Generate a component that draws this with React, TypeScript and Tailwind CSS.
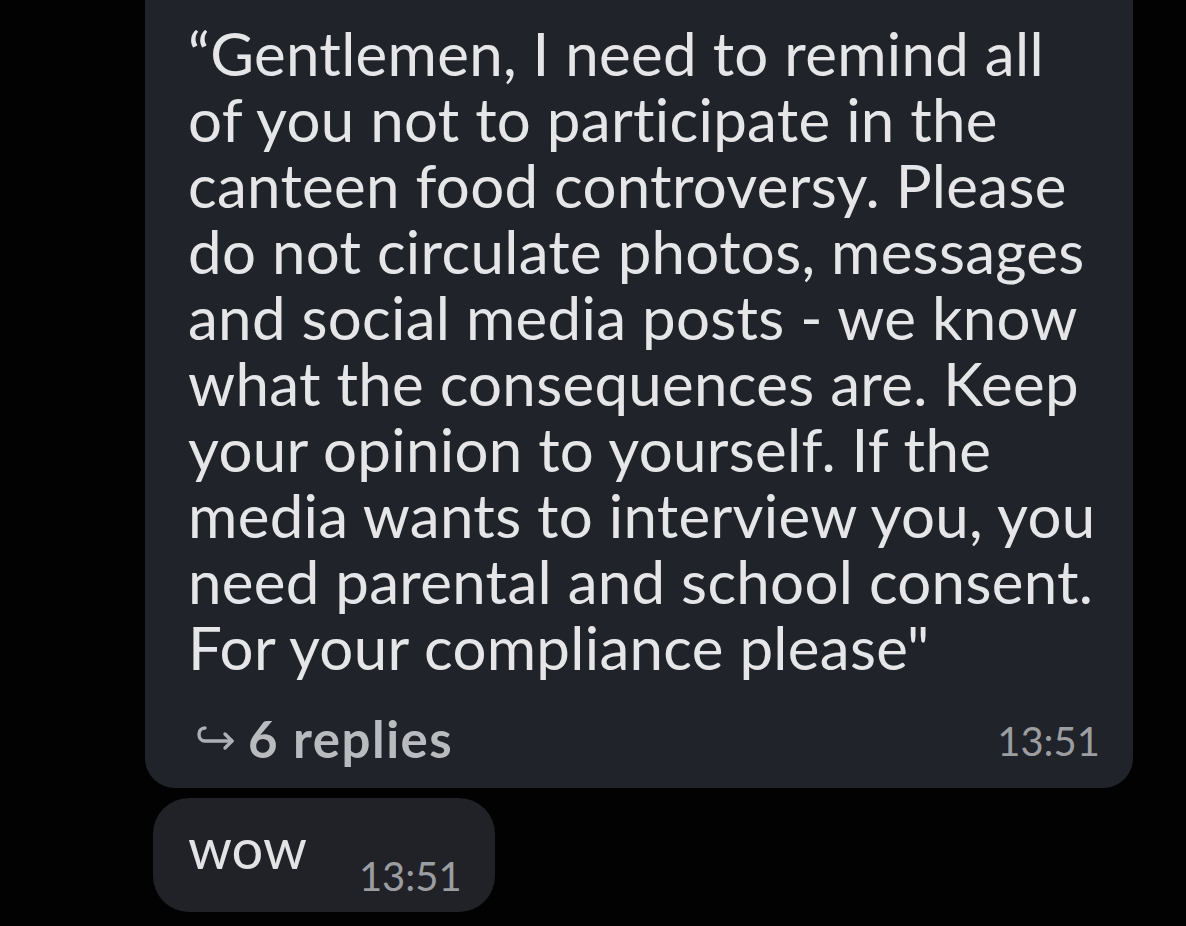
const BODY_LINES = [
  '“Gentlemen, I need to remind all',
  'of you not to participate in the',
  'canteen food controversy. Please',
  'do not circulate photos, messages',
  'and social media posts - we know',
  'what the consequences are. Keep',
  'your opinion to yourself. If the',
  'media wants to interview you, you',
  'need parental and school consent.',
  'For your compliance please"',
];

const FONT = "font-['Lato','Open_Sans','Liberation_Sans',sans-serif]";

const ReplyArrow = () => (
  <svg
    viewBox="0 0 40 30"
    className="h-[30px] w-[40px] text-[#aeb0b5]"
    fill="none"
    stroke="currentColor"
    strokeWidth={3.4}
    strokeLinecap="round"
    strokeLinejoin="round"
    aria-hidden="true"
  >
    <path d="M9 4C5 4 3 7 3 10.5S5.5 17 9 17h27" />
    <path d="M29 10l7 7-7 7" />
  </svg>
);

export default function App() {
  return (
    <div className={`h-[926px] w-full overflow-hidden bg-[#010201] ${FONT}`}>
      <div className="ml-[145px] w-[988px] rounded-b-[30px] bg-[#20232a] pb-[25px] pl-[43px] pr-[33px] pt-[20px]">
        <div className="text-[60px] leading-[66px] tracking-[0.3px] text-[#e6e6e8]">
          {BODY_LINES.map((line) => (
            <div key={line} className="whitespace-nowrap">
              {line}
            </div>
          ))}
        </div>
        <div className="mt-[35px] flex items-end justify-between">
          <div className="flex items-center gap-[12px] pl-[8px] text-[51px] font-bold leading-[48px] tracking-[1.5px] text-[#b9bbbf]">
            <ReplyArrow />
            <span>6 replies</span>
          </div>
          <span className="text-[40px] leading-[44px] text-[#9b9da1]">13:51</span>
        </div>
      </div>

      <div className="ml-[153px] mt-[10px] flex h-[114px] w-[342px] items-end rounded-[36px] bg-[#212227] pb-[16px] pl-[35px]">
        <span className="self-start pt-[22px] text-[56px] leading-none text-[#e3e3e5]">wow</span>
        <span className="ml-[52px] text-[40px] leading-none text-[#9b9da1]">13:51</span>
      </div>
    </div>
  );
}
